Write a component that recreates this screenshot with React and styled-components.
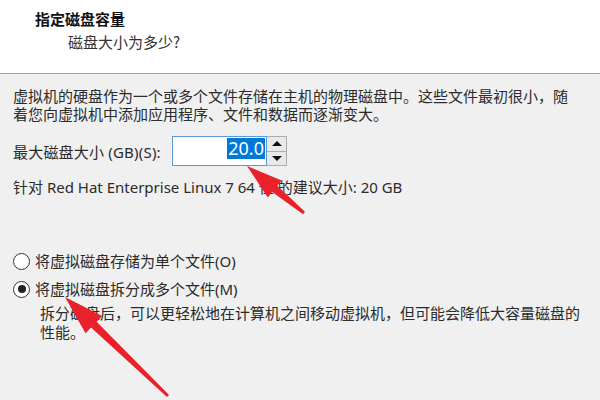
import React from 'react'
import styled, { createGlobalStyle } from 'styled-components'

const Global = createGlobalStyle`
  html, body {
    margin: 0;
    padding: 0;
    background: #f0f0f0;
  }
  body {
    font-family: 'Noto Sans', 'Noto Sans CJK SC', sans-serif;
    color: #222;
  }
`

const Page = styled.div`
  position: relative;
  width: 600px;
  height: 400px;
  overflow: hidden;
  background: #f0f0f0;
`

const Header = styled.div`
  height: 74px;
  background: #fff;
  border-bottom: 1px solid #a0a0a0;
  padding: 9px 0 0 35px;
  box-sizing: border-box;
`

const Title = styled.div`
  font-family: 'Noto Sans CJK SC', sans-serif;
  font-size: 15px;
  font-weight: 700;
  line-height: 20px;
  color: #111;
`

const Subtitle = styled.div`
  font-family: 'Noto Sans CJK SC', sans-serif;
  font-size: 15px;
  line-height: 20px;
  margin: 3px 0 0 33px;
  color: #333;
`

const Body = styled.div`
  padding: 13px 13px 0 13px;
`

const Text = styled.p`
  margin: ${p => p.$mt || 0}px 0 0 ${p => p.$indent || 0}px;
  font-size: 15px;
  line-height: ${p => p.$lh || 18}px;
  color: #2b2b2b;
  white-space: nowrap;
`

const SpinRow = styled.div`
  display: flex;
  align-items: center;
  margin-top: 13px;
`

const Label = styled.span`
  font-size: 15px;
  letter-spacing: 0.2px;
  width: 159px;
  color: #2b2b2b;
`

const Spin = styled.div`
  display: flex;
  height: 30px;
`

const Field = styled.div`
  width: 95px;
  box-sizing: border-box;
  border: 1px solid #5a9ad9;
  background: #fff;
  display: flex;
  align-items: flex-start;
  justify-content: flex-end;
  padding: 1px 1px 0 0;
`

const Selected = styled.span`
  background: #0078d7;
  color: #fff;
  font-size: 18px;
  line-height: 21px;
  padding: 0 1px;
`

const Buttons = styled.div`
  display: flex;
  flex-direction: column;
  width: 20px;
  border: 1px solid #adadad;
  border-left: none;
  box-sizing: border-box;
`

const StepButton = styled.div`
  flex: 1;
  display: flex;
  align-items: center;
  justify-content: center;
  background: #e9e9e9;
  border-top: ${p => (p.$bottom ? '1px solid #adadad' : 'none')};

  &::after {
    content: '';
    border-left: 5px solid transparent;
    border-right: 5px solid transparent;
    ${p => (p.$bottom ? 'border-top: 5px solid #111;' : 'border-bottom: 5px solid #111;')}
  }
`

const Options = styled.div`
  margin-top: 56px;
  display: flex;
  flex-direction: column;
  gap: 10px;
`

const Option = styled.label`
  display: flex;
  align-items: center;
  gap: 5px;
  font-size: 15px;
  line-height: 18px;
  color: #2b2b2b;
`

const Radio = styled.span`
  width: 17px;
  height: 17px;
  box-sizing: border-box;
  border-radius: 50%;
  border: 1px solid #333;
  background: #fff;
  display: flex;
  align-items: center;
  justify-content: center;

  &::after {
    content: '';
    width: 8px;
    height: 8px;
    border-radius: 50%;
    background: ${p => (p.$checked ? '#222' : 'transparent')};
  }
`

const Arrow = styled.svg`
  position: absolute;
  left: 0;
  top: 0;
  pointer-events: none;
`

const arrowPoints = (x1, y1, x2, y2, head = 36, headW = 11, tail = 1.5, neck = 4) => {
  const dx = x2 - x1
  const dy = y2 - y1
  const len = Math.hypot(dx, dy)
  const ux = dx / len
  const uy = dy / len
  const nx = -uy
  const ny = ux
  const bx = x2 - ux * head
  const by = y2 - uy * head
  const pts = [
    [x1 + nx * tail, y1 + ny * tail],
    [bx + nx * neck, by + ny * neck],
    [bx + nx * headW, by + ny * headW],
    [x2, y2],
    [bx - nx * headW, by - ny * headW],
    [bx - nx * neck, by - ny * neck],
    [x1 - nx * tail, y1 - ny * tail],
  ]
  return pts.map(p => p.join(',')).join(' ')
}

export default function App() {
  return (
    <Page>
      <Global />
      <Header>
        <Title>指定磁盘容量</Title>
        <Subtitle>磁盘大小为多少?</Subtitle>
      </Header>
      <Body>
        <Text>
          {'虚拟机的硬盘作为一个或多个文件存储在主机的物理磁盘中。这些文件最初很小，随'}
          <br />
          {'着您向虚拟机中添加应用程序、文件和数据而逐渐变大。'}
        </Text>
        <SpinRow>
          <Label>最大磁盘大小 (GB)(S):</Label>
          <Spin>
            <Field>
              <Selected>20.0</Selected>
            </Field>
            <Buttons>
              <StepButton />
              <StepButton $bottom />
            </Buttons>
          </Spin>
        </SpinRow>
        <Text $mt={12}>针对 Red Hat Enterprise Linux 7 64 位 的建议大小: 20 GB</Text>
        <Options>
          <Option>
            <Radio />
            将虚拟磁盘存储为单个文件(O)
          </Option>
          <Option>
            <Radio $checked />
            将虚拟磁盘拆分成多个文件(M)
          </Option>
        </Options>
        <Text $indent={27} $mt={6} $lh={19}>
          {'拆分磁盘后，可以更轻松地在计算机之间移动虚拟机，但可能会降低大容量磁盘的'}
          <br />
          {'性能。'}
        </Text>
      </Body>
      <Arrow width="600" height="400">
        <polygon points={arrowPoints(304, 213, 247, 166)} fill="#e8212b" />
        <polygon points={arrowPoints(168, 396, 65, 297, 40, 12)} fill="#e8212b" />
      </Arrow>
    </Page>
  )
}
